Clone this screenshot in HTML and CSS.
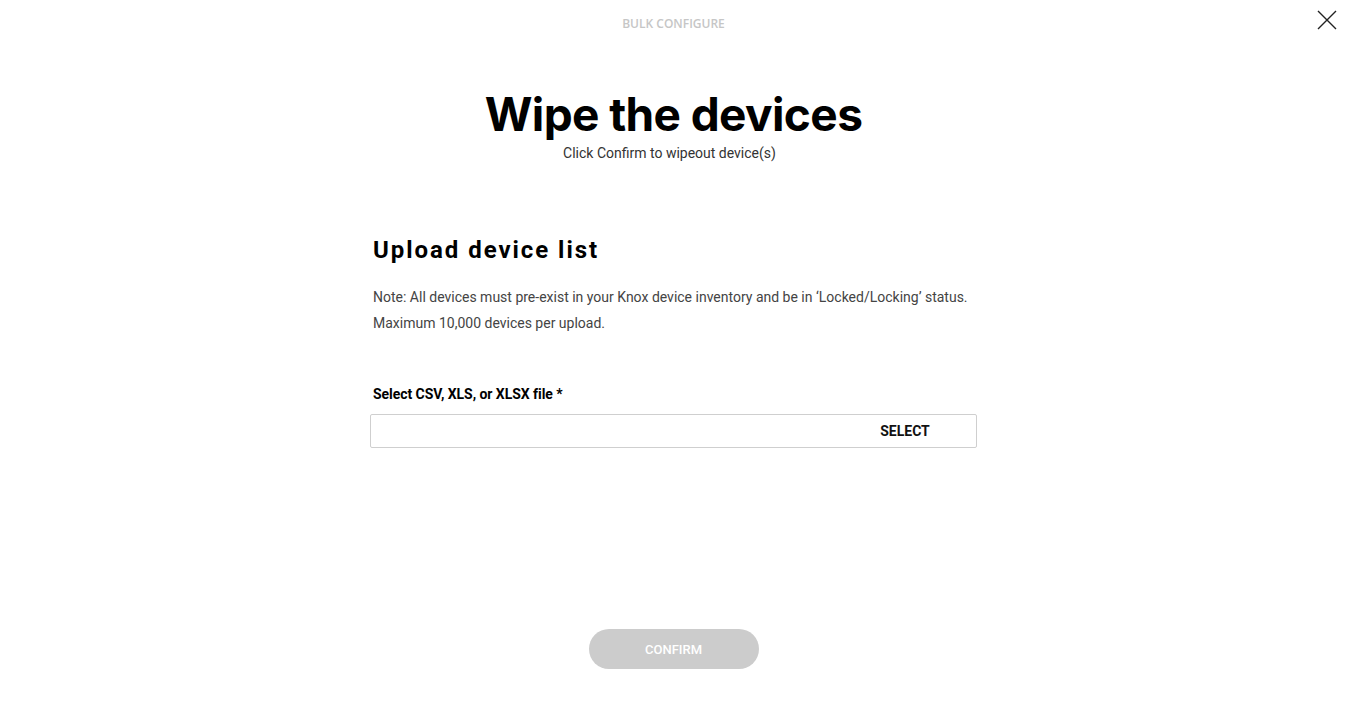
FILE: index.html
```html
<!DOCTYPE html>
<html>
<head>
<meta charset="utf-8">
<link rel="stylesheet" href="styles.css">
</head>
<body>
<div class="page">
  <header class="top">
    <div class="kicker">BULK CONFIGURE</div>
    <button class="close" aria-label="Close">
      <svg width="20" height="20" viewBox="0 0 20 20"><path d="M1 1L19 19M19 1L1 19" stroke="#222" stroke-width="1.4" fill="none"/></svg>
    </button>
  </header>
  <div class="hero">
    <h1 class="title">Wipe the devices</h1>
    <p class="subtitle">Click Confirm to wipeout device(s)</p>
  </div>
  <section class="panel">
    <h2 class="panel-title">Upload device list</h2>
    <p class="note">Note: All devices must pre-exist in your Knox device inventory and be in ‘Locked/Locking’ status.<br>Maximum 10,000 devices per upload.</p>
    <div class="field-label">Select CSV, XLS, or XLSX file *</div>
    <div class="file-input">
      <span class="file-name"></span>
      <span class="select-btn">SELECT</span>
    </div>
  </section>
  <footer class="actions">
    <button class="confirm">CONFIRM</button>
  </footer>
</div>
</body>
</html>
```

FILE: styles.css
```css
* { box-sizing: border-box; }
html, body { margin: 0; padding: 0; background: #fff; }
body { font-family: Roboto, "Noto Sans", sans-serif; color: #222; }
.page { width: 1347px; height: 723px; display: flex; flex-direction: column; align-items: center; }
.top { width: 100%; height: 48px; position: relative; display: flex; justify-content: center; }
.kicker { font-family: "Open Sans", sans-serif; font-size: 12px; font-weight: 600; color: #c6c6c6; margin-top: 15px; letter-spacing: 0; }
.close { position: absolute; right: 10px; top: 10px; background: none; border: 0; padding: 0; width: 20px; height: 20px; cursor: pointer; }
.close svg { display: block; }
.hero { display: flex; flex-direction: column; align-items: center; margin-top: 38px; }
.title { font-family: Inter, sans-serif; font-weight: 700; font-size: 46px; letter-spacing: -0.6px; line-height: 56px; margin: 0; color: #000; }
.subtitle { font-size: 14px; color: #333; margin: 2px 0 0; line-height: 18px; padding-right: 8px; }
.panel { width: 607px; margin-top: 72px; }
.panel-title { font-size: 24px; font-weight: 700; letter-spacing: 1.95px; margin: 0 0 0 3px; line-height: 32px; color: #000; }
.note { font-size: 14px; color: #444; line-height: 26px; margin: 18px 0 0 3px; }
.field-label { font-size: 14px; font-weight: 700; letter-spacing: -0.05px; color: #000; margin: 48px 0 0 3px; line-height: 20px; }
.file-input { margin-top: 10px; height: 34px; border: 1px solid #cfcfcf; border-radius: 2px; display: flex; align-items: center; justify-content: space-between; }
.select-btn { font-size: 14px; font-weight: 700; letter-spacing: 0; color: #111; width: 146px; text-align: center; padding-left: 4px; padding-bottom: 1px; }
.actions { margin-top: 181px; }
.confirm { width: 170px; height: 40px; border-radius: 20px; border: 0; background: #cccccc; color: #fff; font-family: Roboto, sans-serif; font-size: 13px; font-weight: 500; }
```
